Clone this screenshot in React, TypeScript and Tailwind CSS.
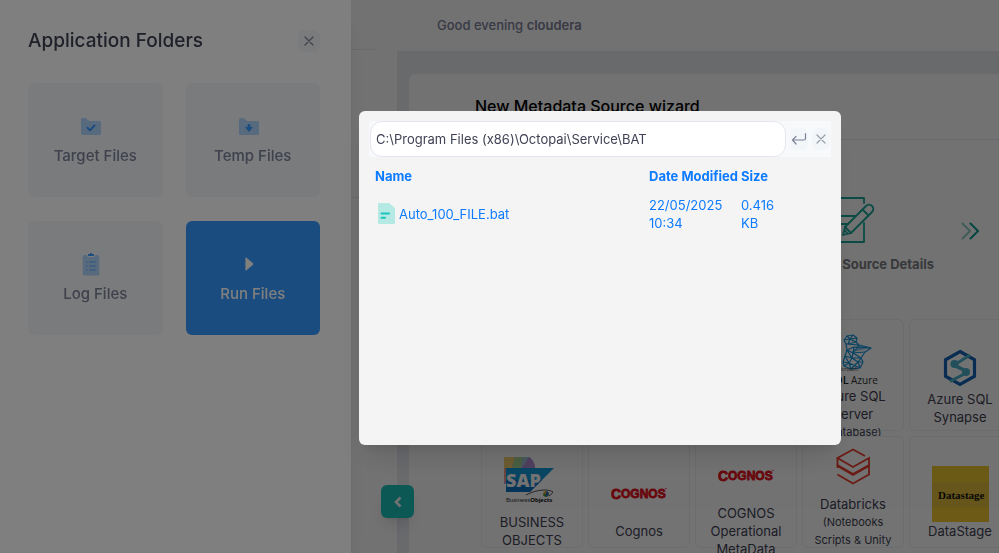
import React, { useState } from 'react';

interface Source {
  id: string;
  name?: string;
  note?: string;
  logo?: React.ReactNode;
  raised?: boolean;
}

/* ---------- Folder icons ---------- */

const FolderIcon: React.FC<{ children: React.ReactNode }> = ({ children }) => (
  <svg width="24" height="24" viewBox="0 0 24 24" fill="none">
    <path d="M3.5 21H20.5C21.6 21 22 20.3 22 19.5V8.5C22 7.7 21.3 7 20.5 7H10L7.4 4.4C7.2 4.1 6.8 4 6.4 4H3.5C2.7 4 2 4.7 2 5.5V19.5C2 20.3 2.7 21 3.5 21Z" fill="#3699FF" opacity="0.35" />
    {children}
  </svg>
);

const TargetIcon = () => (
  <FolderIcon>
    <path d="M8.5 13.8L11 16.4L15.5 11.5" stroke="#3699FF" strokeWidth="2" strokeLinecap="round" strokeLinejoin="round" />
  </FolderIcon>
);

const TempIcon = () => (
  <FolderIcon>
    <path d="M11 10.4H13V13.2H15.6L12 17.6L8.4 13.2H11Z" fill="#3699FF" stroke="#3699FF" strokeWidth="0.6" strokeLinejoin="round" />
  </FolderIcon>
);

const LogIcon = () => (
  <svg width="24" height="24" viewBox="0 0 24 24" fill="none">
    <path d="M8 3V3.5C8 4.3 8.7 5 9.5 5H14.5C15.3 5 16 4.3 16 3.5V3H18C19.3 3 20.3 3.7 20.3 5V21.4C20.3 22.6 19.4 23.4 18 23.4H6C4.6 23.4 3.7 22.6 3.7 21.4V5C3.7 3.7 4.7 3 6 3H8Z" fill="#3699FF" opacity="0.35" />
    <path d="M11 2C11 1.4 11.4 1 12 1C12.6 1 13 1.4 13 2H14.5C14.8 2 15 2.2 15 2.5V3.5C15 3.8 14.8 4 14.5 4H9.5C9.2 4 9 3.8 9 3.5V2.5C9 2.2 9.2 2 9.5 2H11Z" fill="#3699FF" />
    <g fill="#3699FF" opacity="0.35">
      <rect x="10" y="9" width="7" height="2" rx="1" />
      <rect x="7" y="9" width="2" height="2" rx="1" />
      <rect x="7" y="13" width="2" height="2" rx="1" />
      <rect x="10" y="13" width="7" height="2" rx="1" />
      <rect x="7" y="17" width="2" height="2" rx="1" />
      <rect x="10" y="17" width="7" height="2" rx="1" />
    </g>
  </svg>
);

const RunIcon = () => (
  <svg width="24" height="24" viewBox="0 0 24 24">
    <path d="M8.4 6.2C8.4 5.4 9 5.2 9.5 5.7L16 11.3C16.4 11.7 16.4 12.3 16 12.7L9.5 18.3C9 18.8 8.4 18.6 8.4 17.8Z" fill="#fff" />
  </svg>
);

const CloseIcon = () => (
  <svg width="10" height="10" viewBox="0 0 10 10" fill="none" stroke="currentColor" strokeWidth="1.2" strokeLinecap="round">
    <path d="M1 1L9 9M9 1L1 9" />
  </svg>
);

const EnterIcon = () => (
  <svg width="16" height="14" viewBox="0 0 16 14" fill="none" stroke="currentColor" strokeWidth="1.2" strokeLinecap="round" strokeLinejoin="round">
    <path d="M14.5 1.5V6.5C14.5 7.5 14 8 13 8H1.5M5 4.5L1.5 8L5 12" />
  </svg>
);

const FileIcon = () => (
  <svg width="17" height="21" viewBox="0 0 17 21" className="shrink-0">
    <path d="M1 0H11L17 5.2V20C17 20.6 16.6 21 16 21H1C0.4 21 0 20.6 0 20V1C0 0.4 0.4 0 1 0Z" fill="#b5e9e4" />
    <rect x="2.5" y="9.5" width="9.5" height="2" rx="1" fill="#1BC5BD" />
    <rect x="2.5" y="13.8" width="5.5" height="2" rx="1" fill="#1BC5BD" />
  </svg>
);

/* ---------- Source logos ---------- */

const SqlAzureLogo = () => (
  <svg width="56" height="56" viewBox="0 0 56 56">
    <g fill="none" stroke="#1596dd" strokeWidth="1.2" strokeLinejoin="round">
      <path d="M19 9L22 5L28 4L32 7L31 11L34 14L46 17L40 21L36 27L38 31L35 37L26 38L19 35L18 31L20 25L22 19L21 13Z" />
      <path d="M19 9L25 8L32 7M22 5L25 8L28 4M25 8L23 13L31 11M25 8L31 11M21 13L34 14M22 19L29 16L46 17M29 16L28 22L40 21M22 19L28 22L34 14M20 25L27 27L36 27M28 22L27 27L22 19M28 22L36 27M20 25L24 32L18 31M27 27L24 32L35 37M27 27L33 31L38 31M33 31L26 38L24 32L19 35M33 31L36 27M33 31L35 37" />
    </g>
    <path d="M32 14L46 16.5L37 19L27 21L33 17Z" fill="#1596dd" opacity="0.5" />
    <text x="11" y="40" fontSize="5" fill="#333" fontFamily="Open Sans, sans-serif">Microsoft</text>
    <text x="3" y="53" fontSize="11" fill="#222" fontWeight="600" fontFamily="Open Sans, sans-serif">SQL</text>
    <text x="26" y="53" fontSize="10" fill="#333" fontFamily="Open Sans, sans-serif">Azure</text>
  </svg>
);

const SynapseLogo = () => (
  <svg width="56" height="56" viewBox="0 0 56 56" fill="none">
    <path d="M28 17.5L42.5 25.8V42.2L28 50.5L13.5 42.2V25.8Z" stroke="#1566b8" strokeWidth="3.2" />
    <path d="M38 21L23 30.5M34 39L18 47.5" stroke="#4fb0cc" strokeWidth="3" />
    <path d="M22 30.5C25 34 31 34 34 38" stroke="#4fb0cc" strokeWidth="3.6" />
    <circle cx="22.5" cy="30" r="4" fill="#4fb0cc" />
    <circle cx="34" cy="38" r="4" fill="#4fb0cc" />
  </svg>
);

const SapLogo = () => (
  <svg width="56" height="56" viewBox="0 0 56 56">
    <path d="M-1 0H25C29 3 31 7 31 12V27H-1Z" fill="#c9a0d8" />
    <path d="M-1 0H11L8 11H-1Z" fill="#f0cf72" />
    <path d="M11 0H19L17 11H8Z" fill="#a5d492" />
    <path d="M19 0H25L28 4L17 11Z" fill="#9fc6dc" />
    <path d="M25 0C29 2 31 7 31 12H17Z" fill="#b48fd6" />
    <path d="M-1 11H8L4 26L-1 24Z" fill="#f09a88" />
    <path d="M2 11H50L26 35H2Z" fill="#129bdc" />
    <path d="M2 23H38L26 35H2Z" fill="#0b78c8" />
    <text x="2" y="30" fontSize="18" fontWeight="800" fill="#fff" fontFamily="Open Sans, sans-serif">SAP</text>
    <path d="M22 38C33 32 45 32 49 35C48 37 46 38 45 39" stroke="#555" strokeWidth="1" fill="none" />
    <circle cx="42" cy="37" r="2.8" fill="#e0a020" />
    <path d="M42 34.2A2.8 2.8 0 0 1 42 39.8Z" fill="#2a70b8" />
    <path d="M39.2 37A2.8 2.8 0 0 0 42 39.8V37Z" fill="#3a9a40" />
    <text x="2" y="45" fontSize="6" fill="#333" fontFamily="Liberation Sans, sans-serif">Business<tspan fontWeight="700" fill="#000">Objects</tspan></text>
  </svg>
);

const CognosLogo = () => (
  <svg width="56" height="56" viewBox="0 0 56 56" fill="#e8101c" stroke="#e8101c" strokeWidth="0.8" fontFamily="Liberation Sans, sans-serif" fontWeight="700">
    <text x="0" y="33" fontSize="14">C</text>
    <text x="10" y="32" fontSize="12">OGNOS</text>
    <circle cx="55" cy="22.5" r="0.3" />
  </svg>
);

const DatabricksLogo = () => (
  <svg width="56" height="56" viewBox="0 0 56 56" fill="none" stroke="#ee3d2c" strokeWidth="1.8">
    <path d="M40 17L28 10.500L12.500 19L28 28L44 19V26L28 35L12.500 26V20" />
    <path d="M12.500 29V27L28 36L44 27V35.500L28 44.500L12.500 35.500" />
  </svg>
);

const DatastageLogo = () => (
  <svg width="57" height="56" viewBox="0 0 57 56">
    <rect width="57" height="56" fill="#f0c832" />
    <rect y="16" width="57" height="25" fill="#e6c040" />
    <text x="6" y="33" fontSize="11" fontWeight="700" fill="#111" fontFamily="Liberation Serif, serif">Datastage</text>
  </svg>
);

const SOURCES: Source[] = [
  { id: 'a1' },
  { id: 'a2' },
  { id: 'a3' },
  { id: 'a4', name: 'Azure SQL Server', note: '(Database)', logo: <SqlAzureLogo /> },
  { id: 'a5', name: 'Azure SQL Synapse', logo: <SynapseLogo />, raised: true },
  { id: 'b1', name: 'BUSINESS OBJECTS', logo: <SapLogo /> },
  { id: 'b2', name: 'Cognos', logo: <CognosLogo /> },
  { id: 'b3', name: 'COGNOS Operational MetaData', logo: <CognosLogo /> },
  { id: 'b4', name: 'Databricks', note: '(Notebooks Scripts & Unity Catalog)', logo: <DatabricksLogo /> },
  { id: 'b5', name: 'DataStage', logo: <DatastageLogo /> },
  { id: 'c1' },
  { id: 'c2' },
  { id: 'c3' },
  { id: 'c4' },
  { id: 'c5' },
];

const FOLDERS = [
  { id: 'target', name: 'Target Files', icon: <TargetIcon /> },
  { id: 'temp', name: 'Temp Files', icon: <TempIcon /> },
  { id: 'log', name: 'Log Files', icon: <LogIcon /> },
  { id: 'run', name: 'Run Files', icon: <RunIcon /> },
];

const FILES = [{ name: 'Auto_100_FILE.bat', modified: '22/05/2025 10:34', size: '0.416 KB' }];

const SourceTile: React.FC<{ source: Source }> = ({ source }) => (
  <div className={`relative flex h-28 flex-col items-center justify-center rounded-md border border-[#f0f1f4] bg-white px-1 pt-[22px] text-center text-[13px] leading-[18px] text-[#3F4254] ${source.raised ? 'pb-3' : ''}`}>
    {source.logo && <div className="shrink-0">{source.logo}</div>}
    {source.name && <div className="w-20 shrink-0">{source.name}</div>}
    {source.note && <div className="w-20 shrink-0 text-[11px] leading-[18px]">{source.note}</div>}
  </div>
);

const WizardPage = () => (
  <div className="flex h-screen">
    {/* Side menu */}
    <aside className="relative w-[397px] shrink-0 bg-white">
      <div className="h-[50px] w-[375px] border-b border-[#ebedf3]" />
      <div className="h-[148px] border-b border-[#ebedf3]" />
      <button
        aria-label="Collapse menu"
        className="absolute right-[-17px] bottom-[35px] z-10 flex h-[33px] w-[33px] items-center justify-center rounded-md bg-[#1BC5BD] shadow-lg"
      >
        <svg width="8" height="12" viewBox="0 0 8 12" fill="none" stroke="#fff" strokeWidth="2.6">
          <path d="M6.5 1.5L2 6L6.5 10.5" />
        </svg>
      </button>
    </aside>

    <div className="flex min-w-0 flex-1 flex-col">
      <header className="flex h-[51px] shrink-0 items-center bg-white px-10 text-[13px] font-medium text-[#7E8299]">
        <p>Good evening <b className="font-semibold">cloudera</b></p>
      </header>

      <main className="min-h-0 flex-1 overflow-hidden bg-[#e9ecf2] pt-[23px] pl-3">
        <section className="rounded-tl-md bg-white">
          <h1 className="h-[66px] border-b border-[#ebedf3] pt-5 pl-[66px] text-base font-medium text-black">
            New Metadata Source wizard
          </h1>

          {/* Wizard step */}
          <div className="flex h-[179px] justify-end pt-[57px] pr-5">
            <div className="flex flex-col items-end pr-[27px]">
              <svg width="100" height="46" viewBox="0 0 100 46" fill="none" stroke="#1BA89A" strokeWidth="1.8" strokeLinecap="round" strokeLinejoin="round">
                <path d="M30 6V1H0V45H30V26M4 19H21M4 27H14" />
                <path d="M11 30L32 9C36 5 42 11 38 15L17 36L9 38Z" />
                <path d="M28.5 12.5L34.5 18.5M11 30L17 36M11.5 34L13 36" />
              </svg>
              <span className="pt-3 text-[13px] font-bold whitespace-nowrap text-[#7e8085]">Source Details</span>
            </div>
            <svg width="18" height="18" viewBox="0 0 18 18" fill="none" strokeWidth="2" strokeLinecap="round" strokeLinejoin="round" className="mt-[25px] shrink-0">
              <path d="M1.5 1.5L9 9L1.5 16.5" stroke="#8fcfc8" />
              <path d="M9.5 1.5L17 9L9.5 16.5" stroke="#0b9d92" />
            </svg>
          </div>

          <div className="grid grid-cols-[repeat(5,102px)] gap-x-[5px] gap-y-[5px] pl-[72px]">
            {SOURCES.map((source) => (
              <SourceTile key={source.id} source={source} />
            ))}
          </div>
        </section>
      </main>
    </div>
  </div>
);

const FolderDrawer: React.FC<{ active: string; onSelect: (id: string) => void }> = ({ active, onSelect }) => (
  <aside className="fixed inset-y-0 left-0 w-[351px] bg-white pt-7 pr-[31px] pl-7 shadow-xl">
    <div className="flex items-center justify-between">
      <h2 className="text-[19px] leading-[26px] font-medium text-[#3F4254]">Application Folders</h2>
      <button aria-label="Close folders" className="flex h-[22px] w-[22px] items-center justify-center rounded-md bg-[#F3F6F9] text-[#7E8299]">
        <CloseIcon />
      </button>
    </div>
    <div className="mt-[29px] grid grid-cols-2 gap-x-[23px] gap-y-6">
      {FOLDERS.map((folder) => (
        <button
          key={folder.id}
          onClick={() => onSelect(folder.id)}
          className={`flex h-[114px] flex-col items-center justify-center gap-1.5 rounded-md pt-0.5 text-[15px] leading-6 font-medium ${active === folder.id ? 'bg-[#3699FF] text-white' : 'bg-[#F3F6F9] text-[#7E8299]'}`}
        >
          <span className="mr-2">{folder.icon}</span>
          {folder.name}
        </button>
      ))}
    </div>
  </aside>
);

const FileDialog = () => {
  const [path, setPath] = useState('C:\\Program Files (x86)\\Octopai\\Service\\BAT');

  return (
    <div className="fixed inset-0 flex items-center justify-center bg-black/50 pt-0.5 pl-[201px]">
      <div role="dialog" aria-label="Files" className="h-[334px] w-[482px] rounded-md bg-[#f4f4f4] p-2.5 shadow-xl">
        <div className="flex h-9 items-center bg-[#f8f9fb]">
          <input
            aria-label="Folder path"
            value={path}
            onChange={(e) => setPath(e.target.value)}
            className="ml-px h-9 min-w-0 flex-1 rounded-xl border border-[#e4e6ef] bg-white px-[5px] text-[13px] text-[#3F4254] outline-none"
          />
          <button aria-label="Go" className="ml-1 flex h-[22px] w-[18px] items-center justify-center rounded-md bg-[#F3F6F9] text-[#7E8299]">
            <EnterIcon />
          </button>
          <button aria-label="Close" className="mr-px ml-1 flex h-[22px] w-[18px] items-center justify-center rounded-md bg-[#F3F6F9] text-[#9a9dac]">
            <CloseIcon />
          </button>
        </div>

        <table className="mt-[7px] ml-1 table-fixed text-left text-[13px] leading-[18px] text-[#0d7bff]">
          <colgroup>
            <col className="w-[276px]" />
            <col className="w-[92px]" />
            <col className="w-11" />
          </colgroup>
          <thead>
            <tr className="h-6">
              <th className="pl-0.5 font-bold">Name</th>
              <th className="font-bold whitespace-nowrap">Date Modified</th>
              <th className="font-bold">Size</th>
            </tr>
          </thead>
          <tbody>
            {FILES.map((file) => (
              <tr key={file.name} className="h-[52px]">
                <td>
                  <a href="#file" className="flex items-center gap-1 pl-[5px]">
                    <FileIcon />
                    {file.name}
                  </a>
                </td>
                <td className="pr-3">{file.modified}</td>
                <td>{file.size}</td>
              </tr>
            ))}
          </tbody>
        </table>
      </div>
    </div>
  );
};

export default function App() {
  const [folder, setFolder] = useState('run');

  return (
    <div className="h-screen overflow-hidden bg-white font-['Inter',sans-serif]">
      <WizardPage />
      <div className="fixed inset-0 z-20 bg-black/10">
        <FolderDrawer active={folder} onSelect={setFolder} />
        <FileDialog />
      </div>
    </div>
  );
}
